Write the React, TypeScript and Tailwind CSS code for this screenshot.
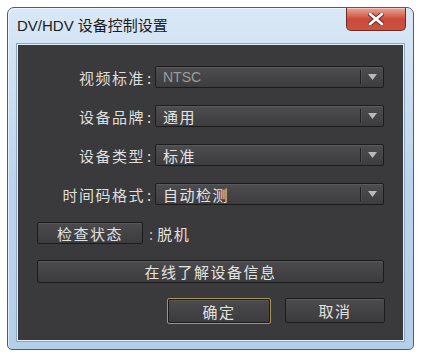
const cjk = "font-['Noto_Sans_CJK_SC',sans-serif]";

type SelectProps = { value: string; disabled?: boolean; latin?: boolean };

function Select({ value, disabled, latin }: SelectProps) {
  return (
    <div className="flex h-[22px] w-[229px] items-stretch rounded-[2px] border border-[#1c1c1d] bg-gradient-to-b from-[#4d4d50] to-[#3d3d40] shadow-[inset_0_1px_0_rgba(255,255,255,0.08)]">
      <div
        className={
          "flex flex-1 items-center pl-[7px] leading-none " +
          (latin
            ? "font-['Liberation_Sans',sans-serif] text-[14px] "
            : cjk + " text-[15px] tracking-[1.5px] ") +
          (disabled ? "text-[#9c9c9e]" : "text-[#e4e4e4]")
        }
      >
        {value}
      </div>
      <div className="my-[3px] w-px bg-[#202022] shadow-[1px_0_0_rgba(255,255,255,0.07)]" />
      <div className="flex w-[22px] items-center justify-center">
        <svg width="9" height="6" viewBox="0 0 9 6">
          <path d="M0 0 H9 L4.5 6 Z" fill="#b9b9bb" />
        </svg>
      </div>
    </div>
  );
}

function Row({ label, children }: { label: string; children: React.ReactNode }) {
  return (
    <div className="flex h-[22px] items-center">
      <div className={`flex w-[118px] justify-end text-[15px] leading-none tracking-[1.5px] text-[#dedede] ${cjk}`}>
        {label}
        <span className="ml-[2px] w-[8px] tracking-normal">:</span>
      </div>
      {children}
    </div>
  );
}

function Button({ label, className = "" }: { label: string; className?: string }) {
  return (
    <div
      className={`flex items-center justify-center rounded-[2px] border border-[#1b1b1c] bg-gradient-to-b from-[#4b4b4e] to-[#3c3c3f] text-[15px] leading-none tracking-[1.5px] text-[#e2e2e2] shadow-[inset_0_1px_0_rgba(255,255,255,0.08)] ${cjk} ${className}`}
    >
      {label}
    </div>
  );
}

export default function App() {
  return (
    <div className="h-[358px] w-[422px] bg-white pl-[7px] pt-[7px]">
      <div className="flex h-[343px] w-[407px] flex-col rounded-t-[7px] rounded-b-[5px] border border-[#4f5d6c] bg-gradient-to-b from-[#d9e8f6] via-[#bcd5ee] to-[#b4cfea] shadow-[inset_1px_1px_0_rgba(255,255,255,0.6)]">
        <div className="flex h-[36px] shrink-0 items-start justify-between">
          <div className="pl-[9px] pt-[9px] font-['Liberation_Sans','Noto_Sans_CJK_SC',sans-serif] text-[15px] leading-[18px] text-[#1b1b1b]">
            DV/HDV 设备控制设置
          </div>
          <div className="mr-[7px] flex h-[23px] w-[60px] items-center justify-center rounded-b-[5px] border border-t-0 border-[#6b2a24] bg-gradient-to-b from-[#e9a598] via-[#cc4a3a] to-[#c9533f] shadow-[inset_0_1px_0_rgba(255,255,255,0.4)]">
            <svg width="16" height="12" viewBox="0 0 16 12">
              <path
                d="M2 1 L14 11 M14 1 L2 11"
                stroke="#5a211b"
                strokeWidth="4.5"
                strokeLinecap="round"
              />
              <path
                d="M2 1 L14 11 M14 1 L2 11"
                stroke="#ffffff"
                strokeWidth="2.8"
                strokeLinecap="round"
              />
            </svg>
          </div>
        </div>
        <div className="mx-[9px] mb-[8px] mr-[9px] flex flex-1 flex-col border border-[#e3eef9] bg-[#3a3a3c] pl-[19px] pr-[18px] pt-[21px] outline outline-1 outline-[#8ea6c0]">
          <div className="flex flex-col gap-[17px]">
            <Row label="视频标准">
              <Select value="NTSC" disabled latin />
            </Row>
            <Row label="设备品牌">
              <Select value="通用" />
            </Row>
            <Row label="设备类型">
              <Select value="标准" />
            </Row>
            <Row label="时间码格式">
              <Select value="自动检测" />
            </Row>
          </div>
          <div className="mt-[17px] flex h-[22px] items-center">
            <Button label="检查状态" className="h-[22px] w-[106px]" />
            <span className={`ml-[6px] text-[15px] leading-none text-[#bdbdbd] ${cjk}`}>:</span>
            <span className={`ml-[4px] text-[15px] leading-none tracking-[1.5px] text-[#e2e2e2] ${cjk}`}>
              脱机
            </span>
          </div>
          <Button label="在线了解设备信息" className="mt-[16px] h-[23px] w-[347px]" />
          <div className="mt-[15px] flex justify-end gap-[14px]">
            <div className="rounded-[2px] border border-[#a89358] p-0">
              <Button label="确定" className="h-[24px] w-[102px]" />
            </div>
            <Button label="取消" className="h-[25px] w-[100px]" />
          </div>
        </div>
      </div>
    </div>
  );
}
